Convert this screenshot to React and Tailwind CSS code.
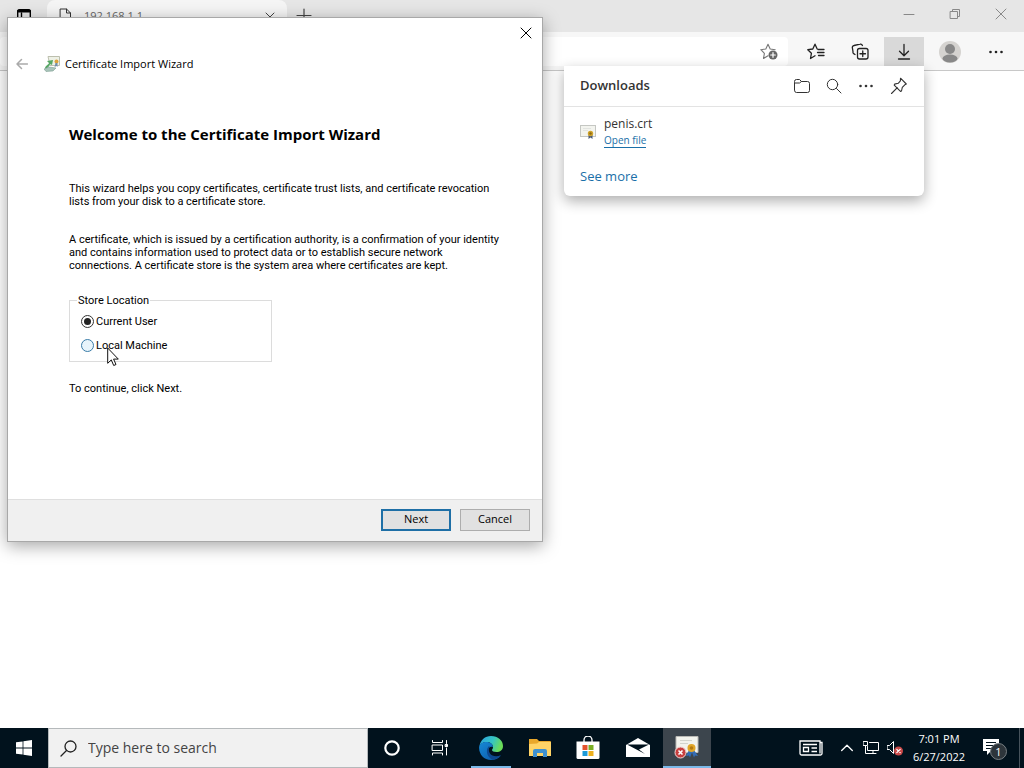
import { useState } from 'react';

const ui = "font-['Open_Sans','Noto_Sans',sans-serif]";

function Svg({ size = 18, children, className = '' }) {
  return (
    <svg
      width={size}
      height={size}
      viewBox={`0 0 ${size} ${size}`}
      fill="none"
      stroke="currentColor"
      strokeLinecap="round"
      strokeLinejoin="round"
      className={`shrink-0 ${className}`}
      aria-hidden="true"
    >
      {children}
    </svg>
  );
}

function Dots() {
  return (
    <Svg size={16}>
      <g fill="currentColor" stroke="none">
        <circle cx="2.5" cy="8" r="1.3" />
        <circle cx="8" cy="8" r="1.3" />
        <circle cx="13.5" cy="8" r="1.3" />
      </g>
    </Svg>
  );
}

function CertificateIcon({ size = 16 }) {
  return (
    <svg width={size} height={size} viewBox="0 0 16 16" className="shrink-0" aria-hidden="true">
      <rect x=".5" y="1.5" width="15" height="11" fill="#f3f4ef" stroke="#c5c7c3" />
      <path d="M3 4.500h8M3 6.500h5" stroke="#e2e4e0" />
      <path d="M8.500 10v5l2-1.500 2 1.500v-5z" fill="#4a5a78" />
      <circle cx="10.500" cy="9.500" r="2.700" fill="#cfa32a" />
      <circle cx="10.500" cy="9.500" r="1.200" fill="#8f6a12" />
    </svg>
  );
}

function WindowButton({ label, children }) {
  return (
    <button aria-label={label} className="flex h-7 w-[46px] items-center justify-center text-[#888]">
      {children}
    </button>
  );
}

function TabStrip() {
  return (
    <div className="flex h-8 items-start bg-[#e6e6e6]">
      <button aria-label="Tab actions" className="flex w-[47px] justify-center pt-2 text-black">
        <Svg size={16}>
          <rect x="1.700" y="1.700" width="12.600" height="12.600" rx="2" strokeWidth="1.400" />
          <path d="M2.500 3h11" strokeWidth="3" />
          <path d="M5.500 5v9" strokeWidth="1.400" />
        </Svg>
      </button>
      <div className="flex h-8 w-60 items-start rounded-t-lg bg-[#f5f5f5] px-[11px] pt-2 text-[#666]">
        <Svg size={16} className="text-[#333]">
          <path d="M2.500 1h6l4 4v10h-10zM8.500 1v4h4" />
        </Svg>
        <span className="ml-2.5 flex-1 text-[11px] leading-4">192.168.1.1</span>
        <button aria-label="Close tab" className="text-[#444]">
          <Svg size={12} className="mt-[3px]">
            <path d="M2 2l8 8M10 2l-8 8" />
          </Svg>
        </button>
      </div>
      <button aria-label="New tab" className="ml-2 pt-2 text-[#444]">
        <Svg size={18}>
          <path d="M9 1v13M2 7.500h14" strokeWidth="1.200" />
        </Svg>
      </button>
      <div className="ml-auto flex">
        <WindowButton label="Minimize">
          <Svg size={12}><path d="M1 6.500h10" /></Svg>
        </WindowButton>
        <WindowButton label="Restore">
          <Svg size={12}>
            <path d="M1.500 3.500h7v7h-7zM3.500 3.500v-2h7v7h-2" />
          </Svg>
        </WindowButton>
        <WindowButton label="Close">
          <Svg size={12}><path d="M1 1l10 10M11 1L1 11" /></Svg>
        </WindowButton>
      </div>
    </div>
  );
}

function Toolbar() {
  return (
    <div className="flex h-[39px] items-stretch border-b border-[#c8c8c8] bg-[#f7f7f7] pt-[5px] pr-2 pb-1">
      <div className="flex flex-1 items-center justify-end rounded bg-white pr-2.5">
        <button aria-label="Add to favorites" className="text-[#777]">
          <Svg size={18}>
            <path d="M8 12.800l-4.500 2.700.9-5.200L.800 6.700l5-.7L8 1.200 10.200 6l5 .7" strokeWidth="1.100" />
            <circle cx="13" cy="12" r="4.500" fill="#666" stroke="none" />
            <path d="M13 9.700v4.600M10.700 12h4.600" stroke="#fff" strokeWidth="1.200" />
          </Svg>
        </button>
      </div>
      <div className="flex items-center text-[#222]">
        <button aria-label="Favorites" className="ml-2 flex w-10 justify-center">
          <Svg size={18}>
            <path d="M8 12.800l-4.500 2.700.9-5.200L.800 6.700l5-.7L8 1.200 10.200 6" strokeWidth="1.300" />
            <path d="M11 6.500h6M10.500 9.500H17M11.500 12.500H17" strokeWidth="1.300" />
          </Svg>
        </button>
        <button aria-label="Collections" className="ml-1 flex w-10 justify-center">
          <Svg size={18}>
            <path d="M4 11.500l-1-.6a2 2 0 01-1-2.200L1.400 5A2 2 0 013 2.500l6-1.300a2 2 0 012.400 1.300" strokeWidth="1.300" />
            <rect x="6.500" y="5.500" width="10.500" height="10.500" rx="2" strokeWidth="1.300" />
            <path d="M11.750 8v5.500M9 10.750h5.500" strokeWidth="1.300" />
          </Svg>
        </button>
        <button aria-label="Downloads" className="ml-1 flex w-10 items-center justify-center self-stretch bg-[#d9d9d9]">
          <Svg size={18}>
            <path d="M9 1.500v11M4.500 8.200L9 12.700l4.500-4.500M3.500 16h11" strokeWidth="1.300" />
          </Svg>
        </button>
        <button aria-label="Profile" className="ml-[15px]">
          <Svg size={22}>
            <circle cx="11" cy="11" r="11" fill="#d5d3d0" stroke="none" />
            <circle cx="11" cy="8" r="5" fill="#888" stroke="none" />
            <ellipse cx="11" cy="17.500" rx="7.500" ry="4" fill="#888" stroke="none" />
          </Svg>
        </button>
        <button aria-label="Settings and more" className="ml-[15px] flex w-10 justify-center">
          <Dots />
        </button>
      </div>
    </div>
  );
}

function DownloadsPanel() {
  return (
    <section className="absolute top-[66px] right-[100px] w-[360px] rounded-b-md bg-white shadow-[0_5px_14px_rgba(0,0,0,0.32)]">
      <header className="flex h-[41px] items-center border-b border-[#e3e3e3] px-4 text-[#333]">
        <h2 className="flex-1 text-[13px] font-semibold">Downloads</h2>
        <div className="flex gap-4">
          <button aria-label="Open downloads folder">
            <Svg size={16}>
              <path d="M.500 4V3.500a2 2 0 012-2h3l2 2h6a2 2 0 012 2v7a2 2 0 01-2 2h-11a2 2 0 01-2-2zM.500 5h5l2-1.500" />
            </Svg>
          </button>
          <button aria-label="Search downloads">
            <Svg size={16}>
              <circle cx="6.500" cy="6.500" r="5.200" />
              <path d="M10.500 10.500l4.500 4.500" />
            </Svg>
          </button>
          <button aria-label="More options">
            <Dots />
          </button>
          <button aria-label="Pin downloads">
            <Svg size={18}>
              <path d="M10.500 1.200l5.800 5.800-1.500.8-2.500 2.600-.8 3.600-1 .4-6.300-6.300.4-1 3.600-.8 2.200-2.500zM7.300 10.700l-5.800 5.800" strokeWidth="1.100" />
            </Svg>
          </button>
        </div>
      </header>
      <div className="flex items-center gap-2 px-4 pt-2">
        <CertificateIcon />
        <div className="flex flex-col items-start">
          <span className="text-xs leading-[18px] text-[#333]">penis.crt</span>
          <a href="#open" className="border-b border-[#1a6fa8] text-[10px] leading-[14px] text-[#1a6fa8]">
            Open file
          </a>
        </div>
      </div>
      <a href="#more" className="mt-4 mb-2 ml-4 block w-fit text-[13px] leading-6 text-[#1a6fa8]">
        See more
      </a>
    </section>
  );
}

function StoreOption({ label, value, selected, onSelect }) {
  const hovered = value === 'machine';
  return (
    <label className="flex h-6 items-center gap-0.5">
      <input
        type="radio"
        name="store"
        value={value}
        checked={selected === value}
        onChange={() => onSelect(value)}
        className={`size-[13px] appearance-none rounded-full border p-[2px] checked:bg-[#222] checked:bg-clip-content ${
          hovered ? 'border-[#3a7ca8] bg-[#e8f4fb]' : 'border-[#333] bg-white'
        }`}
      />
      {label}
    </label>
  );
}

function Wizard() {
  const [store, setStore] = useState('user');

  return (
    <section className="absolute top-[17px] left-[7px] flex min-h-[525px] w-[536px] flex-col border border-[#a8a8a8] bg-white text-black shadow-[0_4px_16px_rgba(0,0,0,0.35)]">
      <div className="flex h-[30px] items-center justify-end pr-2.5">
        <button aria-label="Close">
          <Svg size={12}>
            <path d="M1 1l10 10M11 1L1 11" />
          </Svg>
        </button>
      </div>
      <header className="flex h-8 items-center px-2">
        <button aria-label="Back" className="text-[#aaa]">
          <Svg size={12}>
            <path d="M11.500 6H1M5.500 1.500L1 6l4.500 4.500" strokeWidth="1.500" />
          </Svg>
        </button>
        <svg width="16" height="16" viewBox="0 0 16 16" className="ml-4" aria-hidden="true">
          <path d="M4 .500h11.500v9H6z" fill="#eef1e6" stroke="#bcbfae" />
          <path d="M1 12c1-3 3-3 4-5l-2-2 6-1-1 5-2-1c0 2-2 3-4 5z" fill="#55a764" />
          <path d="M0 13l5-2 7 1-3 3-7 .500z" fill="#a9c4ba" stroke="#6f9284" strokeWidth=".5" />
          <circle cx="12.500" cy="5.500" r="2" fill="#dba23b" />
          <path d="M11.500 7l-1 4 2-1 1 1v-4z" fill="#728eaa" />
        </svg>
        <span className="ml-[5px] text-[11px]">Certificate Import Wizard</span>
      </header>
      <div className="flex-1 pt-[42px] pr-8 pl-[61px] text-[11px] leading-[13px] font-['Roboto',sans-serif]">
        <h1 className={`text-[15px] leading-6 font-bold ${ui}`}>Welcome to the Certificate Import Wizard</h1>
        <p className="mt-9">
          This wizard helps you copy certificates, certificate trust lists, and certificate revocation
          <br />
          lists from your disk to a certificate store.
        </p>
        <p className="mt-[25px]">
          A certificate, which is issued by a certification authority, is a confirmation of your identity
          <br />
          and contains information used to protect data or to establish secure network
          <br />
          connections. A certificate store is the system area where certificates are kept.
        </p>
        <fieldset className="mt-[22px] w-[203px] border border-[#dcdcdc] px-[11px] pb-1">
          <legend className="-ml-1 px-px">Store Location</legend>
          <div className="pt-0.5">
            <StoreOption label="Current User" value="user" selected={store} onSelect={setStore} />
            <StoreOption label="Local Machine" value="machine" selected={store} onSelect={setStore} />
          </div>
        </fieldset>
        <p className="mt-5">To continue, click Next.</p>
      </div>
      <footer className="flex h-[42px] items-center justify-end gap-[9px] border-t border-[#dfdfdf] bg-[#f0f0f0] pr-3 pb-0.5 text-[11px]">
        <button className="h-[22px] w-[70px] border-2 border-[#1e6fa6] bg-[#e1e1e1]">Next</button>
        <button className="h-[22px] w-[70px] border border-[#adadad] bg-[#e1e1e1]">Cancel</button>
      </footer>
    </section>
  );
}

function Cursor() {
  return (
    <svg width="13" height="20" viewBox="0 0 13 20" className="absolute top-[347px] left-[107px]" aria-hidden="true">
      <path d="M.700 1v15.300l3.600-3.400 2.400 5.600 2.300-1-2.400-5.400h4.700z" fill="#fff" stroke="#111" />
    </svg>
  );
}

function TaskButton({ label, children, className = '' }) {
  return (
    <button aria-label={label} className={`flex h-10 w-12 items-center justify-center ${className}`}>
      {children}
    </button>
  );
}

function Taskbar() {
  return (
    <footer className="flex h-10 shrink-0 items-center bg-[#01121d] text-white">
      <TaskButton label="Start">
        <svg width="16" height="16" viewBox="0 0 16 16" fill="#fff" aria-hidden="true">
          <path d="M0 2.300l6.600-.9v6.200H0zM7.400 1.300L16 0v7.600H7.400zM0 8.400h6.600v6.200L0 13.700zM7.400 8.400H16V16l-8.600-1.200z" />
        </svg>
      </TaskButton>
      <label className="flex h-10 w-80 items-center border border-[#b5b9bb] bg-[#f1f1f1] pl-[11px] text-[#222]">
        <Svg size={17}>
          <circle cx="10.500" cy="6.500" r="5.500" strokeWidth="1.300" />
          <path d="M6.500 10.500L1 16" strokeWidth="1.300" />
        </Svg>
        <input
          aria-label="Search"
          placeholder="Type here to search"
          className="ml-[11px] min-w-0 flex-1 bg-transparent text-sm outline-none placeholder:text-[#444]"
        />
      </label>
      <TaskButton label="Cortana">
        <Svg size={18}><circle cx="9" cy="9" r="6.700" strokeWidth="2.200" /></Svg>
      </TaskButton>
      <TaskButton label="Task View">
        <Svg size={18}>
          <path d="M1.500 1.500v2h10v-2M1.500 16v-2h10v2M1.500 6h10v5.500h-10zM15.500 1.500v3M15.500 9v7" />
          <path d="M14.500 5.500h2v2h-2z" fill="#fff" />
        </Svg>
      </TaskButton>
      <TaskButton label="Microsoft Edge" className="relative mr-px ml-[3px] after:absolute after:inset-x-1 after:bottom-0 after:h-0.5 after:bg-[#7ab8e8]">
        <svg width="24" height="24" viewBox="0 0 24 24" aria-hidden="true">
          <defs>
            <linearGradient id="edgeTop" x1="0" x2="1" y1="0" y2=".3">
              <stop offset="0" stopColor="#2b9fe0" />
              <stop offset=".6" stopColor="#35c5c4" />
              <stop offset="1" stopColor="#6bdc58" />
            </linearGradient>
            <linearGradient id="edgeLow" x1="0" x2="1" y1="0" y2="1">
              <stop offset="0" stopColor="#1689d6" />
              <stop offset="1" stopColor="#0c55a4" />
            </linearGradient>
          </defs>
          <path d="M.500 10C1.500 4 6 0 12 0c7 0 12 4.500 12 10 0 4-3 6-6.500 6-3 0-4.500-1-4.500-2 0-.7 1-1.200 1-3 0-3-3-5-6.500-5C4 6 1.500 8 .500 10z" fill="url(#edgeTop)" />
          <path d="M.100 12C0 8.500 3 6 7.500 6c4 0 6.500 2.500 6.500 5-5-2-7 5-1.500 9 3 2 7 1.200 9.500-.500C19.500 22.500 16 24 12 24 5 24 .200 18.500.100 12z" fill="url(#edgeLow)" />
          <path d="M9.500 10.500c-4 5 0 12.500 5 13.200 3-.5 5.500-2 7.500-4.600-4 2-9 1.400-11-1.600-1.500-2.200-1.700-5-.2-7z" fill="#0d488f" />
        </svg>
      </TaskButton>
      <TaskButton label="File Explorer">
        <svg width="22" height="20" viewBox="0 0 22 20" aria-hidden="true">
          <path d="M0 1h8l2 2h11a1 1 0 011 1v14H0z" fill="#e9a82b" />
          <path d="M0 6l8-.500 2-1.500h12v14H0z" fill="#ffd467" />
          <path d="M4 19v-6a2 2 0 012-2h10a2 2 0 012 2v6h-4v-4H8v4z" fill="#3f91cf" />
        </svg>
      </TaskButton>
      <TaskButton label="Microsoft Store">
        <svg width="24" height="24" viewBox="0 0 24 24" aria-hidden="true">
          <path d="M8 6V4a4 4 0 018 0v2" fill="none" stroke="#fff" strokeWidth="1.300" />
          <path d="M.500 5.500h23v16a1.500 1.500 0 01-1.500 1.500H2A1.500 1.500 0 01.500 21.500z" fill="#fff" />
          <path d="M6.500 9h5v5h-5z" fill="#e3532d" />
          <path d="M12.500 9h5v5h-5z" fill="#7aaf25" />
          <path d="M6.500 15h5v5h-5z" fill="#1c9ad8" />
          <path d="M12.500 15h5v5h-5z" fill="#eeb11f" />
        </svg>
      </TaskButton>
      <TaskButton label="Mail" className="ml-0.5">
        <svg width="24" height="20" viewBox="0 0 24 20" aria-hidden="true">
          <path d="M0 7l12-7 12 7v12H0z" fill="#fff" />
          <path d="M1 6.500h22l-10 5 6 4.500z" fill="#01121d" />
        </svg>
      </TaskButton>
      <TaskButton label="Certificate Import Wizard" className="ml-px border-b-2 border-[#7ab8e8] bg-[#3c454d]">
        <svg width="26" height="24" viewBox="0 0 26 24" aria-hidden="true">
          <path d="M2 1.500h22v16H2z" fill="#f2f3ed" stroke="#b9b9b5" />
          <path d="M6 5.500h12M6 8.500h8" stroke="#d2d4cd" />
          <path d="M15 15l-3 6 3-.500 1 2 2-5 2 5 1-2 3 .500-4-6z" fill="#326cb5" />
          <circle cx="17.500" cy="13" r="4" fill="#e0a628" />
          <circle cx="17.500" cy="13" r="1.800" fill="#b67b10" />
          <circle cx="6.500" cy="17.500" r="5.500" fill="#c63f3f" stroke="#f0d7d7" />
          <path d="M4.500 15.500l4 4M8.500 15.500l-4 4" stroke="#fff" strokeWidth="1.600" />
        </svg>
      </TaskButton>
      <div className="ml-auto flex h-10 items-center">
        <button aria-label="News and interests">
          <svg width="24" height="16" viewBox="0 0 24 16" fill="none" stroke="#fff" strokeWidth="1.300" aria-hidden="true">
            <path d="M21 2.500V1H1v12.500a1.500 1.500 0 001.500 1.500h19a1.500 1.500 0 001.500-1.500v-11h-2v11M4 4.500h14M12.500 8H18M12.500 11.500H18" />
            <path d="M4.500 7.500h5v4h-5z" />
          </svg>
        </button>
        <button aria-label="Show hidden icons" className="ml-[18px]">
          <Svg size={12}><path d="M.700 8.500L6 3.200l5.300 5.300" strokeWidth="1.300" /></Svg>
        </button>
        <button aria-label="Network" className="ml-2.5">
          <Svg size={16}>
            <path d="M6.500 2.500h9v8h-11v-4M.500 1.500h4v4h-4zM2.500 5.500v8h5M10 10.500v3M7 13.500h6" />
          </Svg>
        </button>
        <button aria-label="Volume muted" className="ml-2">
          <Svg size={16}>
            <path d="M.500 5.500h2l4-4v12l-4-4h-2z" />
            <circle cx="11.500" cy="11" r="4.500" fill="#c94949" stroke="none" />
            <path d="M9.800 9.300l3.400 3.400M13.200 9.300l-3.400 3.400" strokeWidth="1.200" />
          </Svg>
        </button>
        <div className="ml-[9px] w-[54px] text-center text-[11px] leading-[18px]">
          <div>7:01 PM</div>
          <div>6/27/2022</div>
        </div>
        <button aria-label="Notifications" className="mr-3 ml-[17px]">
          <svg width="24" height="24" viewBox="0 0 24 24" aria-hidden="true">
            <path d="M0 3h16v12h-8l-4 4v-4H0z" fill="#fff" />
            <path d="M3 6.500h10M3 9.500h10M3 12.500h6" stroke="#01121d" />
            <circle cx="15.500" cy="15.500" r="8" fill="#2d353b" stroke="#777e83" />
            <text x="15.500" y="19.500" textAnchor="middle" fontSize="11" fill="#fff">1</text>
          </svg>
        </button>
        <div className="mr-1 h-10 w-px bg-[#47535c]" />
      </div>
    </footer>
  );
}

export default function App() {
  return (
    <div className={`relative flex h-screen flex-col overflow-hidden bg-white ${ui}`}>
      <TabStrip />
      <Toolbar />
      <main className="flex-1" />
      <DownloadsPanel />
      <Wizard />
      <Cursor />
      <Taskbar />
    </div>
  );
}
